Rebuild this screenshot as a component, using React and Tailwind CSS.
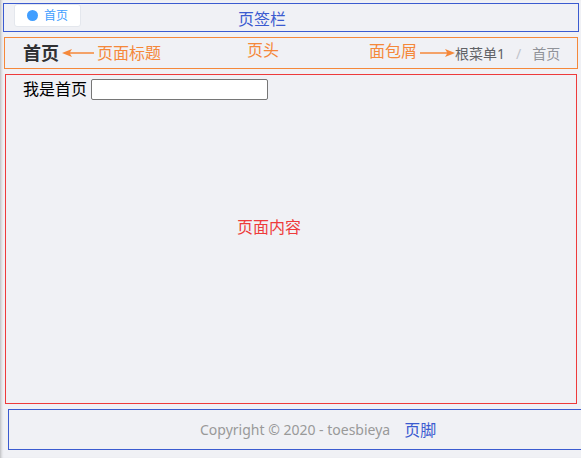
// 布局说明页：标出页签栏、页头、面包屑、页面内容、页脚各区域
const cjk = "font-['Noto_Sans','Noto_Sans_CJK_SC',sans-serif]";

function ArrowLeft() {
  return (
    <svg width="32" height="10" viewBox="0 0 32 10" className="shrink-0">
      <path d="M0 5 L10 1 L8 4.2 L32 4.2 L32 5.8 L8 5.8 L10 9 Z" fill="#f5883a" />
    </svg>
  );
}

function ArrowRight() {
  return (
    <svg width="35" height="10" viewBox="0 0 35 10" className="shrink-0">
      <path d="M35 5 L25 1 L27 4.2 L0 4.2 L0 5.8 L27 5.8 L25 9 Z" fill="#f5883a" />
    </svg>
  );
}

function TabBar() {
  return (
    <div className="ml-[3px] mr-[2px] mt-[3px] flex h-[29px] items-start border border-[#3b5bd0]">
      <div className="ml-[10px] flex h-[23px] w-[67px] items-center rounded-[3px] border border-[#e4e7ed] bg-white pl-[12px]">
        <span className="h-[11px] w-[11px] rounded-full bg-[#409eff]" />
        <span className="ml-[6px] text-[12px] text-[#409eff]">首页</span>
      </div>
      <span className="ml-[157px] mt-[3px] text-[16px] text-[#3b5bd0]">页签栏</span>
    </div>
  );
}

function Header() {
  return (
    <div className="ml-[4px] mr-[3px] mt-[5px] flex h-[32px] items-center border border-[#f5883a] pl-[18px]">
      <span className="text-[18px] font-bold text-[#303133]">首页</span>
      <span className="ml-[3px]">
        <ArrowLeft />
      </span>
      <span className="ml-[3px] text-[16px] text-[#f5883a]">页面标题</span>
      <span className="ml-[86px] mb-[6px] text-[16px] text-[#f5883a]">页头</span>
      <span className="ml-[90px] mb-[4px] text-[16px] text-[#f5883a]">面包屑</span>
      <span className="ml-[3px]">
        <ArrowRight />
      </span>
      <nav className="flex items-center text-[14px]">
        <span className="text-[#606266]">根菜单1</span>
        <span className="mx-[11px] text-[#c0c4cc]">/</span>
        <span className="text-[#909399]">首页</span>
      </nav>
    </div>
  );
}

function Content() {
  return (
    <div className="ml-[5px] mr-[4px] mt-[5px] flex h-[330px] flex-col border border-[#ee3b3b]">
      <div className="ml-[17px] mt-[2px] flex items-center">
        <span className="text-[16px] text-black">我是首页</span>
        <input className="ml-[4px] h-[21px] w-[177px] rounded-[2px] border border-[#767676] bg-white px-1 text-[13px] outline-none" />
      </div>
      <div className="flex flex-1 items-center justify-center pb-[50px] pr-[44px]">
        <span className="text-[16px] text-[#ee3b3b]">页面内容</span>
      </div>
    </div>
  );
}

function Footer() {
  return (
    <div className="ml-[8px] mr-[-4px] mt-[5px] flex h-[41px] items-center border border-[#3b5bd0] pl-[191px]">
      <span className="text-[14px] text-[#999999]">Copyright © 2020 - toesbieya</span>
      <span className="ml-[14px] text-[16px] text-[#3b5bd0]">页脚</span>
    </div>
  );
}

export default function App() {
  return (
    <div
      className={`flex h-[458px] w-[581px] flex-col overflow-hidden bg-[#f0f1f5] shadow-[inset_3px_0_3px_-2px_rgba(0,0,0,0.25)] ${cjk}`}
    >
      <TabBar />
      <Header />
      <Content />
      <Footer />
    </div>
  );
}
